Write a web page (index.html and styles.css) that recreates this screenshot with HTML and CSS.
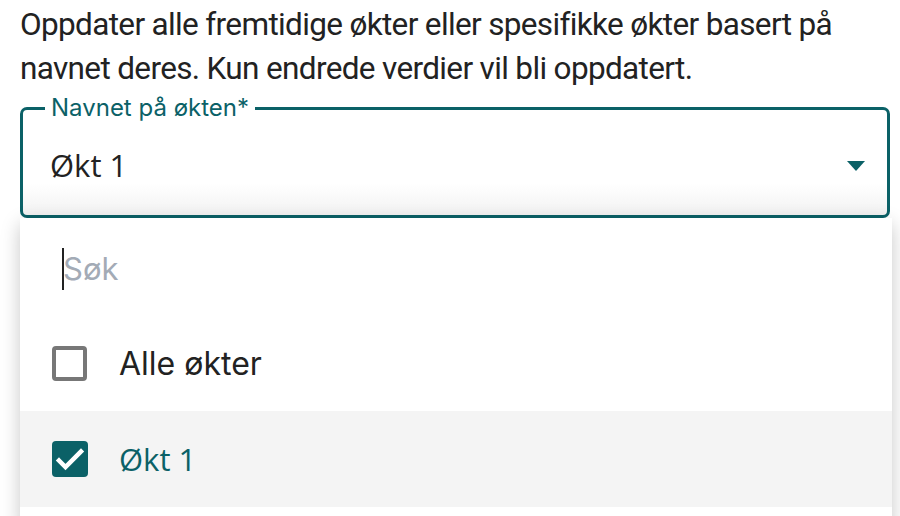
FILE: index.html
```html
<!DOCTYPE html>
<html lang="no">
<head>
    <meta charset="UTF-8">
    <meta name="viewport" content="width=device-width, initial-scale=1.0">
    <title>Oppdater økter</title>
    <link rel="stylesheet" href="styles.css">
</head>
<body>
    <p class="intro">Oppdater alle fremtidige økter eller spesifikke økter basert på navnet deres. Kun endrede verdier vil bli oppdatert.</p>

    <fieldset class="field">
        <legend>Navnet på økten*</legend>
        <div class="field-value">
            <span>Økt 1</span>
            <svg class="arrow" width="18" height="10" viewBox="0 0 18 10"><path d="M0 0 H18 L9 10 Z" fill="#0b6167"/></svg>
        </div>
    </fieldset>

    <div class="menu">
        <div class="search">
            <span class="caret"></span>
            <span class="placeholder">Søk</span>
        </div>
        <div class="option">
            <span class="box"></span>
            <span class="option-label">Alle økter</span>
        </div>
        <div class="option selected">
            <span class="box checked">
                <svg width="36" height="36" viewBox="0 0 36 36"><path d="M7 19.5 L13.5 26 L29 10.5" fill="none" stroke="#fff" stroke-width="4.5" stroke-linecap="square"/></svg>
            </span>
            <span class="option-label">Økt 1</span>
        </div>
    </div>
</body>
</html>
```

FILE: styles.css
```css
html, body {
    margin: 0;
    padding: 0;
    background-color: #ffffff;
    color: #222222;
}

body {
    width: 900px;
    overflow: hidden;
}

.intro {
    margin: 0;
    padding: 3px 20px 0 20px;
    font-family: Roboto, sans-serif;
    font-size: 31.5px;
    line-height: 44px;
    letter-spacing: -0.65px;
    color: #222222;
}

.field {
    margin: 5px 10px 0 20px;
    padding: 0 22px 0 27px;
    border: 3px solid #0b6167;
    border-radius: 7px;
    background: linear-gradient(to bottom, #ffffff 70%, #f2f2f2 100%);
    font-family: "Open Sans", sans-serif;
}

.field legend {
    padding: 0 6px;
    margin-left: -5px;
    font-family: Inter, sans-serif;
    font-size: 24px;
    line-height: 24px;
    color: #0b6167;
}

.field-value {
    display: flex;
    align-items: center;
    justify-content: space-between;
    height: 101px;
    margin-top: -6px;
    font-size: 31px;
    color: #222222;
}

.field-value .arrow {
    margin-top: 2px;
}

.menu {
    width: 872px;
    margin-left: 20px;
    background-color: #ffffff;
    box-shadow: 0 6px 18px rgba(0, 0, 0, 0.22);
    font-family: Inter, sans-serif;
    padding-bottom: 20px;
}

.search {
    display: flex;
    align-items: center;
    height: 97px;
    padding-left: 42px;
}

.caret {
    width: 2px;
    height: 42px;
    margin-top: 4px;
    background-color: #222222;
}

.placeholder {
    margin-top: 4px;
    margin-left: -1px;
    font-size: 31px;
    color: #a3abb6;
}

.option {
    display: flex;
    align-items: center;
    height: 96px;
    padding-left: 32px;
    gap: 32px;
}

.option-label {
    font-size: 32px;
    color: #222222;
}

.box {
    box-sizing: border-box;
    width: 35px;
    height: 35px;
    border: 4px solid #777777;
    border-radius: 4px;
}

.selected {
    background-color: #f4f4f4;
}

.selected .option-label {
    font-family: "Open Sans", sans-serif;
    font-size: 31px;
    color: #0b6167;
}

.selected .box {
    margin-right: -1px;
}

.box.checked {
    width: 36px;
    height: 36px;
    border: none;
    background-color: #0b6167;
}

.box.checked svg {
    display: block;
}
```
